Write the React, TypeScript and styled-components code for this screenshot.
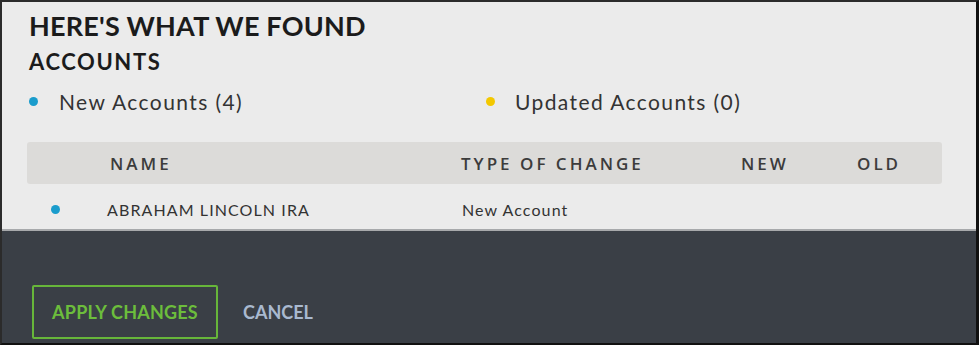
import React from 'react';
import styled, { createGlobalStyle } from 'styled-components';

const GlobalStyle = createGlobalStyle`
  html, body {
    margin: 0;
    padding: 0;
    background: #1a1a1a;
  }
  * {
    box-sizing: border-box;
  }
`;

const Frame = styled.div`
  width: 979px;
  height: 345px;
  display: flex;
  flex-direction: column;
  border-top: 2px solid #2b2b2b;
  border-left: 2px solid #2b2b2b;
  border-right: 3px solid #111;
  border-bottom: 2px solid #111;
  font-family: 'Lato', 'Open Sans', sans-serif;
`;

const Body = styled.section`
  height: 229px;
  flex-shrink: 0;
  background: #ebebeb;
  padding: 9px 34px 0 25px;
  border-bottom: 2px solid #a7a9ab;
  display: flex;
  flex-direction: column;
`;

const Title = styled.h1`
  margin: 0;
  font-size: 27px;
  line-height: 30px;
  font-weight: 700;
  color: #1b1b1b;
  letter-spacing: 0.2px;
  padding-left: 2px;
`;

const Subtitle = styled.h2`
  margin: 9px 0 0;
  font-size: 22px;
  line-height: 24px;
  font-weight: 700;
  color: #1b1b1b;
  letter-spacing: 1.6px;
  padding-left: 2px;
`;

const Legend = styled.div`
  display: flex;
  margin-top: 15px;
  height: 26px;
  align-items: center;
`;

const LegendItem = styled.div<{ $width: number }>`
  display: flex;
  align-items: center;
  width: ${p => p.$width}px;
  font-size: 21px;
  letter-spacing: 1.4px;
  color: #333;
`;

const Dot = styled.span<{ $color: string; $gap?: number }>`
  width: 9px;
  height: 9px;
  border-radius: 50%;
  background: ${p => p.$color};
  margin-right: ${p => p.$gap ?? 20}px;
  flex-shrink: 0;
`;

const Table = styled.div`
  margin-top: 28px;
  display: flex;
  flex-direction: column;
`;

const HeaderRow = styled.div`
  display: grid;
  grid-template-columns: 81px 351px 280px 116px 1fr;
  align-items: center;
  height: 42px;
  background: #dcdbd9;
  border-radius: 3px;
  padding-left: 2px;
`;

const HeadCell = styled.div`
  font-family: 'Open Sans', sans-serif;
  font-size: 17px;
  font-weight: 600;
  letter-spacing: 3px;
  color: #3c3c3c;
`;

const DataRow = styled.div`
  display: grid;
  grid-template-columns: 56px 355px 1fr;
  align-items: center;
  height: 44px;
  margin-top: 3px;
  padding-left: 24px;
`;

const Cell = styled.div`
  font-size: 16px;
  letter-spacing: 1.1px;
  color: #333;
`;

const Footer = styled.footer`
  flex: 1;
  background: #3a3f46;
  display: flex;
  align-items: flex-end;
  gap: 25px;
  padding: 0 0 4px 30px;
`;

const ApplyButton = styled.button`
  width: 186px;
  height: 54px;
  background: transparent;
  border: 2px solid #67b63a;
  border-radius: 2px;
  color: #6cbd3c;
  font-family: 'Lato', sans-serif;
  font-size: 18px;
  font-weight: 700;
  letter-spacing: 0.2px;
  cursor: pointer;
`;

const CancelButton = styled.button`
  height: 54px;
  background: transparent;
  border: none;
  padding: 0;
  color: #a9b9cf;
  font-family: 'Lato', sans-serif;
  font-size: 18px;
  font-weight: 700;
  cursor: pointer;
`;

const App: React.FC = () => {
  return (
    <>
      <GlobalStyle />
      <Frame>
        <Body>
          <Title>HERE'S WHAT WE FOUND</Title>
          <Subtitle>ACCOUNTS</Subtitle>
          <Legend>
            <LegendItem $width={459}>
              <Dot $color="#1a9ccc" style={{ marginLeft: 2 }} $gap={21} />
              New Accounts (4)
            </LegendItem>
            <LegendItem $width={300}>
              <Dot $color="#f3c800" />
              Updated Accounts (0)
            </LegendItem>
          </Legend>
          <Table>
            <HeaderRow>
              <span />
              <HeadCell>NAME</HeadCell>
              <HeadCell>TYPE OF CHANGE</HeadCell>
              <HeadCell>NEW</HeadCell>
              <HeadCell>OLD</HeadCell>
            </HeaderRow>
            <DataRow>
              <Dot $color="#1a9ccc" $gap={0} />
              <Cell>ABRAHAM LINCOLN IRA</Cell>
              <Cell>New Account</Cell>
            </DataRow>
          </Table>
        </Body>
        <Footer>
          <ApplyButton>APPLY CHANGES</ApplyButton>
          <CancelButton>CANCEL</CancelButton>
        </Footer>
      </Frame>
    </>
  );
};

export default App;
